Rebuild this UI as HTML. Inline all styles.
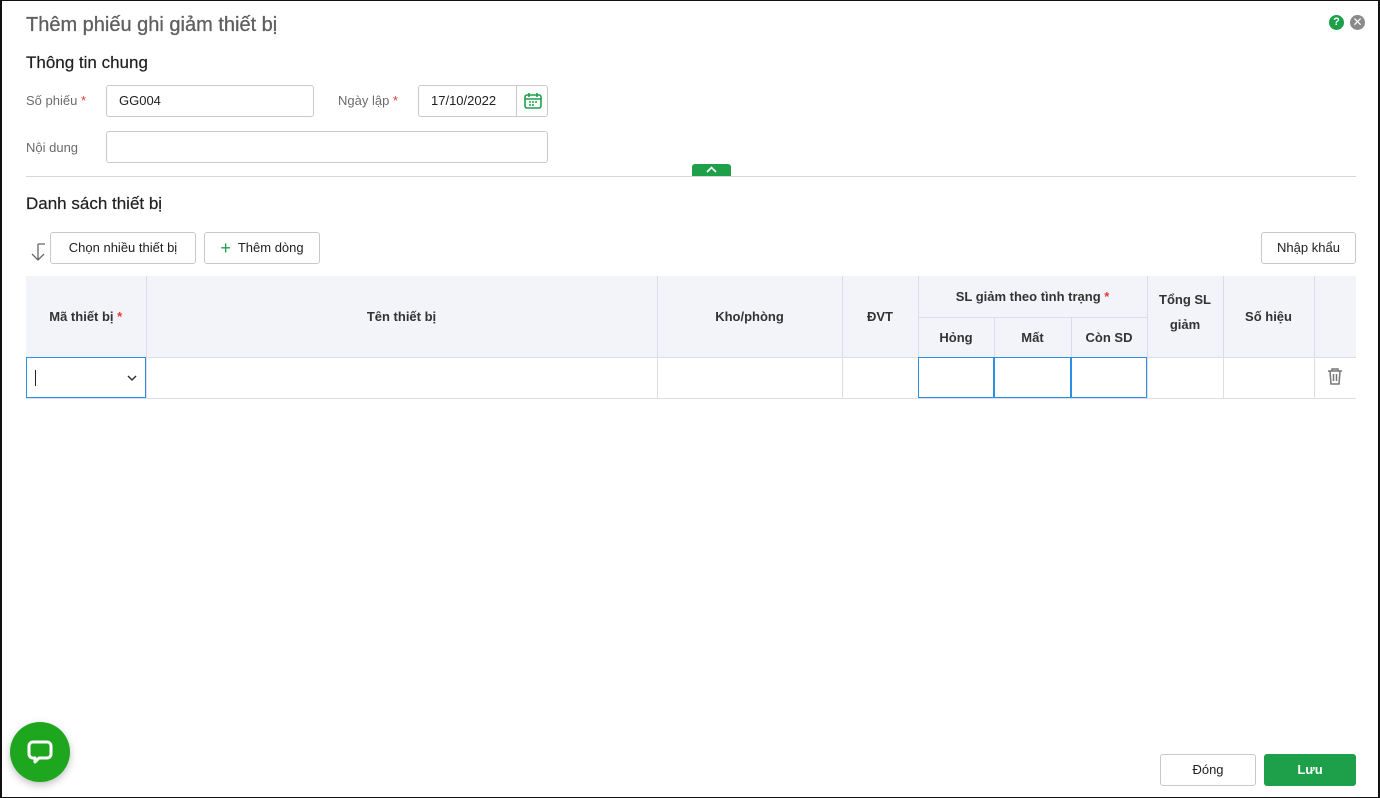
<!DOCTYPE html>
<html><head><meta charset="utf-8"><style>
*{box-sizing:border-box;margin:0;padding:0}
body{width:1380px;height:798px;overflow:hidden;font-family:"Liberation Sans",sans-serif;color:#212121;background:#fff;position:relative;font-size:13px}
.frame{position:absolute;left:0;top:0;width:1380px;height:798px;border:1px solid #111;border-left-width:2px;border-right-width:2px}
.a{position:absolute}
.lbl{color:#6b6b6b;font-size:13px}
.req{color:#e53935}
.inp{position:absolute;border:1px solid #c9c9c9;border-radius:3px;background:#fff;font-size:13px;padding-left:12px;line-height:30px}
.btn{position:absolute;border:1px solid #c9c9c9;border-radius:3px;background:#fff;font-size:13px;text-align:center;line-height:30px;color:#212121}
table{position:absolute;left:26px;top:276px;border-collapse:collapse;width:1330px;table-layout:fixed}
th{background:#f3f4f9;font-size:13px;color:#333;border:1px solid #dcdde6;border-top:none;font-weight:bold}
td{border:1px solid #dcdde6;height:41px}
tr>:first-child{border-left:none}tr>:last-child{border-right:none}
.bl{outline:1px solid #2d8ee6;outline-offset:-1px}
</style></head><body>
<div class="frame"></div>
<div class="a" style="left:26px;top:14px;font-size:20px;color:#5f5f5f;-webkit-text-stroke:0.3px #5f5f5f">Thêm phiếu ghi giảm thiết bị</div>
<div class="a" style="left:1329px;top:15px;width:15px;height:15px;border-radius:50%;background:#1ea04b;color:#fff;font-size:11px;font-weight:bold;text-align:center;line-height:15px">?</div>
<div class="a" style="left:1350px;top:15px;width:15px;height:15px;border-radius:50%;background:#8a8a8a;color:#fff;font-size:12px;text-align:center;line-height:15px">✕</div>
<div class="a" style="left:26px;top:53px;font-size:17px;-webkit-text-stroke:0.2px #212121">Thông tin chung</div>
<div class="a lbl" style="left:26px;top:93px">Số phiếu <span class="req">*</span></div>
<div class="inp" style="left:106px;top:85px;width:208px;height:32px">GG004</div>
<div class="a lbl" style="left:338px;top:93px">Ngày lập <span class="req">*</span></div>
<div class="inp" style="left:418px;top:85px;width:130px;height:32px">17/10/2022</div>
<div class="a" style="left:516px;top:86px;width:1px;height:30px;background:#c9c9c9"></div>
<svg class="a" style="left:523px;top:91px" width="20" height="20" viewBox="0 0 20 20" fill="none" stroke="#1ea04b" stroke-width="1.6"><rect x="2" y="4" width="16" height="13" rx="2"/><path d="M2 8h16M6 2v4M14 2v4M6 11h2M9 11h2M12 11h2M6 14h2M9 14h2"/></svg>
<div class="a lbl" style="left:26px;top:140px">Nội dung</div>
<div class="inp" style="left:106px;top:131px;width:442px;height:32px"></div>
<div class="a" style="left:26px;top:176px;width:1330px;height:1px;background:#d5d6e3"></div>
<div class="a" style="left:692px;top:164px;width:39px;height:12px;background:#1ea04b;border-radius:3px 3px 0 0"></div>
<svg class="a" style="left:706px;top:166px" width="11" height="7" viewBox="0 0 11 7" fill="none" stroke="#fff" stroke-width="1.6"><path d="M1 6l4.5-4.5L10 6"/></svg>
<div class="a" style="left:26px;top:194px;font-size:17px;-webkit-text-stroke:0.2px #212121">Danh sách thiết bị</div>
<svg class="a" style="left:29px;top:242px" width="18" height="20" viewBox="0 0 18 20" fill="none" stroke="#666" stroke-width="1.3"><path d="M9 2v16M3 12l6 6 6-6M9 2h7"/></svg>
<div class="btn" style="left:50px;top:232px;width:146px;height:32px">Chọn nhiều thiết bị</div>
<div class="btn" style="left:204px;top:232px;width:116px;height:32px"><span style="color:#1ea04b;font-size:18px;vertical-align:-2px">+</span>&nbsp; Thêm dòng</div>
<div class="btn" style="left:1261px;top:232px;width:95px;height:32px">Nhập khẩu</div>
<table>
<colgroup><col style="width:120px"><col style="width:511px"><col style="width:185px"><col style="width:76px"><col style="width:76px"><col style="width:77px"><col style="width:76px"><col style="width:76px"><col style="width:91px"><col style="width:42px"></colgroup>
<tr style="height:41px"><th rowspan="2">Mã thiết bị <span class="req">*</span></th><th rowspan="2">Tên thiết bị</th><th rowspan="2">Kho/phòng</th><th rowspan="2">ĐVT</th><th colspan="3">SL giảm theo tình trạng <span class="req">*</span></th><th rowspan="2" style="line-height:25px;padding-bottom:8px">Tổng SL<br>giảm</th><th rowspan="2">Số hiệu</th><th rowspan="2"></th></tr>
<tr style="height:40px"><th>Hỏng</th><th>Mất</th><th>Còn SD</th></tr>
<tr><td class="bl" style="position:relative"><span style="position:absolute;left:9px;top:12px;width:1px;height:16px;background:#222"></span><svg style="position:absolute;right:9px;top:17px" width="10" height="7" viewBox="0 0 10 7" fill="none" stroke="#333" stroke-width="1.5"><path d="M1 1l4 4 4-4"/></svg></td><td></td><td></td><td></td><td class="bl"></td><td class="bl"></td><td class="bl"></td><td></td><td></td><td style="text-align:center"><svg width="16" height="18" viewBox="0 0 16 18" fill="none" stroke="#777" stroke-width="1.5"><path d="M1 4h14M5 4V2h6v2M3 4l1 13h8l1-13M6.5 7v7M9.5 7v7"/></svg></td></tr>
</table>
<div class="btn" style="left:1160px;top:754px;width:96px;height:32px">Đóng</div>
<div class="btn" style="left:1264px;top:754px;width:92px;height:32px;background:#1ea04b;border-color:#1ea04b;color:#fff;font-weight:bold">Lưu</div>
<div class="a" style="left:10px;top:722px;width:60px;height:60px;border-radius:50%;background:#1fa61f;box-shadow:0 3px 8px rgba(0,0,0,.25)"></div>
<svg class="a" style="left:25px;top:737px" width="30" height="30" viewBox="0 0 30 30" fill="none" stroke="#fff" stroke-width="3"><path d="M8 5h14a4 4 0 0 1 4 4v8a4 4 0 0 1-4 4h-8l-4 4v-4H8a4 4 0 0 1-4-4V9a4 4 0 0 1 4-4z" stroke-linejoin="round"/></svg>
</body></html>
